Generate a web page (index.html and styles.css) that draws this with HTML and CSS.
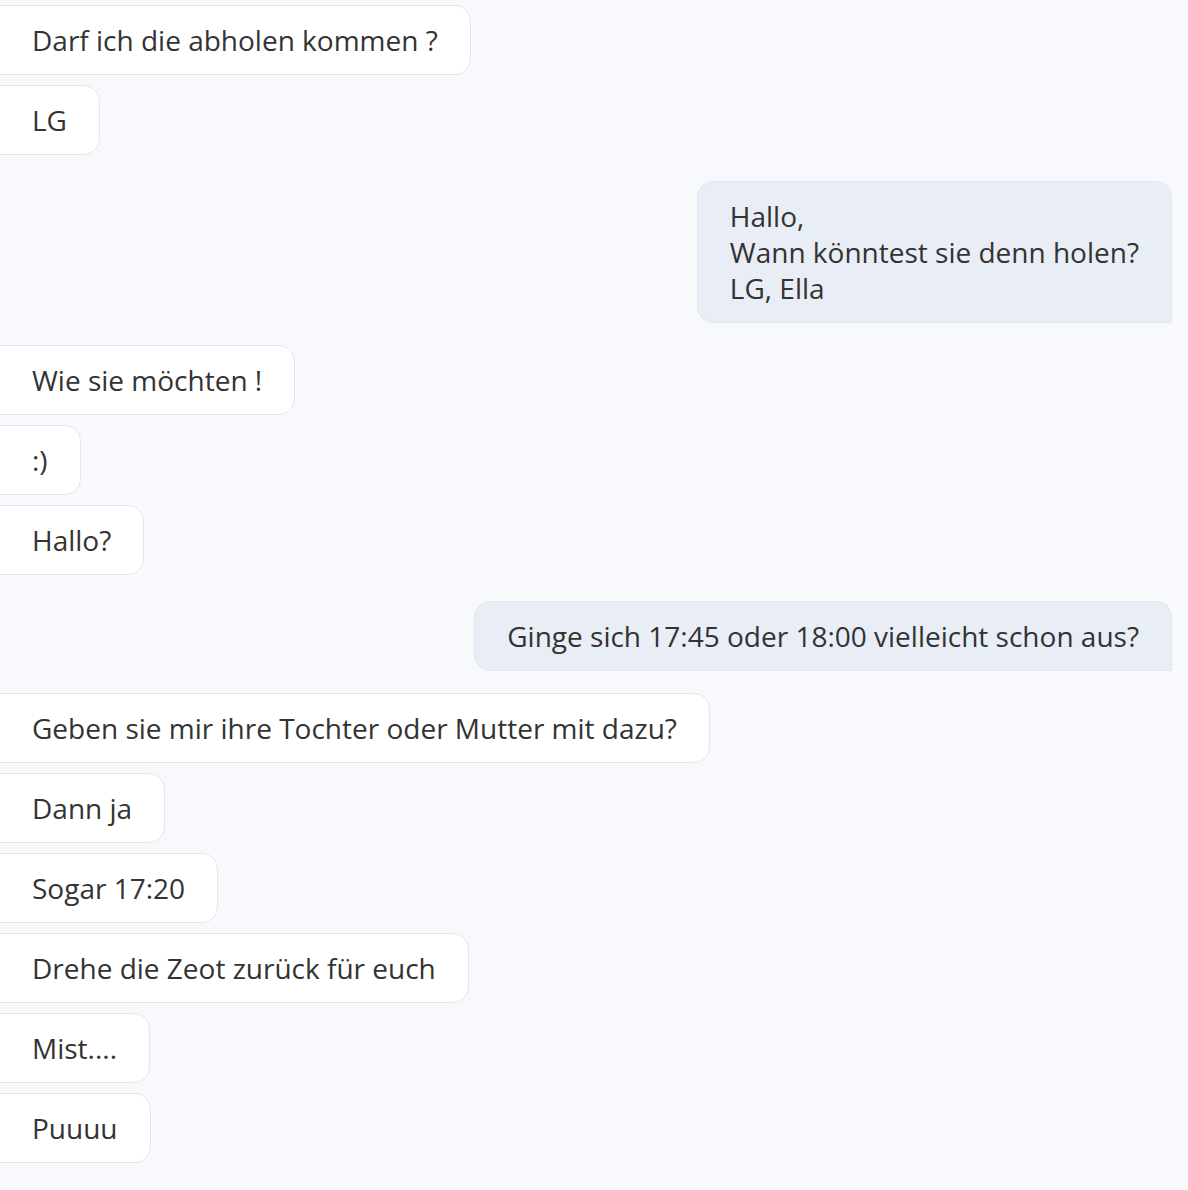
FILE: index.html
```html
<!DOCTYPE html>
<html lang="de">
<head>
<meta charset="utf-8">
<link rel="stylesheet" href="styles.css">
</head>
<body>
<div class="chat">
  <div class="msg in"><div class="bubble">Darf ich die abholen kommen ?</div></div>
  <div class="msg in"><div class="bubble">LG</div></div>
  <div class="msg out"><div class="bubble">Hallo,<br>Wann könntest sie denn holen?<br>LG, Ella</div></div>
  <div class="msg in"><div class="bubble">Wie sie möchten !</div></div>
  <div class="msg in"><div class="bubble">:)</div></div>
  <div class="msg in"><div class="bubble">Hallo?</div></div>
  <div class="msg out"><div class="bubble">Ginge sich 17:45 oder 18:00 vielleicht schon aus?</div></div>
  <div class="msg in"><div class="bubble">Geben sie mir ihre Tochter oder Mutter mit dazu?</div></div>
  <div class="msg in"><div class="bubble">Dann ja</div></div>
  <div class="msg in"><div class="bubble">Sogar 17:20</div></div>
  <div class="msg in"><div class="bubble">Drehe die Zeot zurück für euch</div></div>
  <div class="msg in"><div class="bubble">Mist....</div></div>
  <div class="msg in"><div class="bubble">Puuuu</div></div>
</div>
</body>
</html>
```

FILE: styles.css
```css
html, body {
  margin: 0;
  padding: 0;
  background: #f8f9fd;
}
body {
  font-family: "Open Sans", "Noto Sans", sans-serif;
  font-size: 28px;
  line-height: 36px;
  color: #333333;
  height: 1190px;
  overflow: hidden;
}
.chat {
  display: flex;
  flex-direction: column;
  gap: 10px;
  padding: 5px 16px 0 0;
  margin-left: -1px;
}
.msg {
  display: flex;
}
.msg.out {
  justify-content: flex-end;
  margin-top: 16px;
  margin-bottom: 12px;
}
.bubble {
  padding: 16px 32px;
  border: 1px solid #e2e6ef;
  white-space: nowrap;
}
.in .bubble {
  background: #ffffff;
  border-radius: 0 16px 16px 0;
}
.out .bubble {
  background: #e9edf5;
  border-radius: 16px 16px 0 16px;
}
```
